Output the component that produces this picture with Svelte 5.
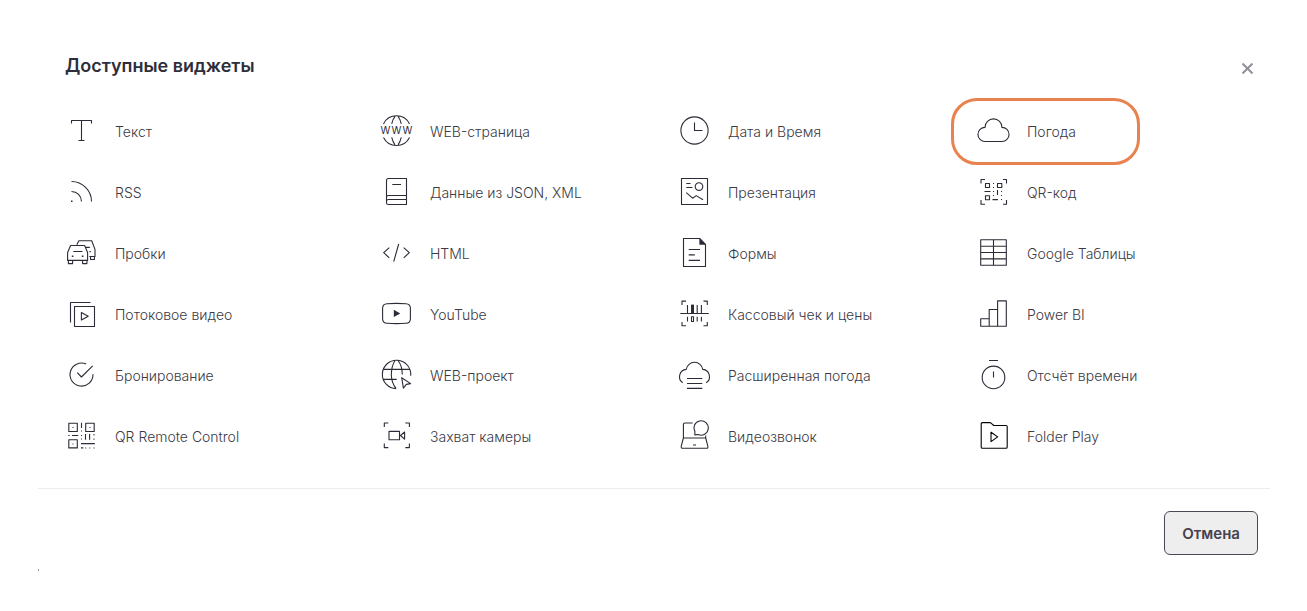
<script>
  const widgets = [
    { id: 'text', label: 'Текст' },
    { id: 'web', label: 'WEB-страница' },
    { id: 'clock', label: 'Дата и Время' },
    { id: 'weather', label: 'Погода', selected: true },
    { id: 'rss', label: 'RSS' },
    { id: 'data', label: 'Данные из JSON, XML' },
    { id: 'slides', label: 'Презентация' },
    { id: 'qr', label: 'QR-код' },
    { id: 'traffic', label: 'Пробки' },
    { id: 'html', label: 'HTML' },
    { id: 'forms', label: 'Формы' },
    { id: 'sheets', label: 'Google Таблицы' },
    { id: 'stream', label: 'Потоковое видео' },
    { id: 'youtube', label: 'YouTube' },
    { id: 'receipt', label: 'Кассовый чек и цены' },
    { id: 'powerbi', label: 'Power BI' },
    { id: 'booking', label: 'Бронирование' },
    { id: 'project', label: 'WEB-проект' },
    { id: 'forecast', label: 'Расширенная погода' },
    { id: 'timer', label: 'Отсчёт времени' },
    { id: 'remote', label: 'QR Remote Control' },
    { id: 'camera', label: 'Захват камеры' },
    { id: 'call', label: 'Видеозвонок' },
    { id: 'folder', label: 'Folder Play' }
  ];

  // Stroked outlines on a 32×32 grid
  const outlines = {
    text: 'M6.5 8.5V5.5H26.5V8.5M16.5 5.5V25.5M13.5 25.5H19.5',
    web: 'M3.5 8.9A14.5 14.5 0 0 1 29.5 8.9M3.5 22.4A14.5 14.5 0 0 0 29.5 22.4M15 1.4Q12.8 4 11.7 8.9M18 1.4Q20.2 4 21.3 8.9M11.7 22.4Q12.8 27 15 29.8M21.3 22.4Q20.2 27 18 29.8',
    clock: 'M30.1 15.5A13.6 13.6 0 1 1 2.9 15.5A13.6 13.6 0 1 1 30.1 15.5M16.5 7.5V15.5H24.5',
    weather: 'M8 26.5H25A7.05 7.05 0 0 0 25 12.4A8.5 8.5 0 0 0 8 12.4A7.05 7.05 0 0 0 8 26.5Z',
    rss: 'M6.5 5.5A20 20 0 0 1 26.5 25.5M6.5 15.5A10 10 0 0 1 16.5 25.5',
    data: 'M26.5 20V2.5H8.5Q6.5 2.5 6.5 4.5V27Q6.5 28.5 8.5 28.5H26.5V19.5H8.5Q6.5 19.5 6.5 21.5M26.5 23.5H8.5Q6.5 23.5 6.5 25.5M12.3 8.5H21',
    slides: 'M3.5 3V28.5H29.5V2.5H3.5ZM8.3 7.5H12.5M8.3 11.5H14.5M24.8 10.6A3.8 3.8 0 1 1 17.2 10.6A3.8 3.8 0 1 1 24.8 10.6M8.3 16.6L14.6 22.2L18.2 19.6L25 23.7',
    qr: 'M4 7.5V3.5H8M26 3.5H29.5V7.5M29.5 24V28.2H26M8 28.2H4V24M8.5 7.5H12.5V11.5H8.5ZM20.5 7.5H24.8V11.5H20.5ZM8.5 19.8H12.5V23.8H8.5ZM7.5 15.5H13.5M20.5 14V19M15.5 23.6H21',
    traffic: 'M5.6 8.5H19.6L22.6 15.5V23.4H2.6V15.5ZM3.4 23.4V26.6H7.6V23.4M17.6 23.4V26.6H21.9V23.4M8.3 14.5H17.4M11.8 7.8L13.9 3.7H26.7L30 12.4V19.5H24.3M25.6 19.5V22.5H29.4V19.5M20.3 10.4H24.8',
    html: 'M9.3 10.6L3.7 15.7L9.3 20.8M18.7 7L13.7 24.7M23.7 10.6L29.3 15.7L23.7 20.8',
    forms: 'M21.7 1.5H5.5V29.5H27.5V7.5ZM10.7 12.5H22M10.7 17.9H16.8M10.7 23.4H22',
    sheets: 'M3.7 2.8H29.3V28.3H3.7ZM16.5 2.8V28.3M3.7 9.2H29.3M3.7 15.5H29.3M3.7 21.9H29.3',
    stream: 'M5.5 24.5V4.5H25.5M9.5 8.5H29.5V28.5H9.5ZM16.4 14.5V22L23.2 18.2Z',
    youtube: 'M7 5.7Q16.5 5.1 26 5.7Q30.2 6 30.4 10V21Q30.2 25 26 25.3Q16.5 25.9 7 25.3Q2.8 25 2.6 21V10Q2.8 6 7 5.7Z',
    receipt: 'M4 7V3.1H8M25.5 3.1H29.3V7M29.3 24V27.8H25.5M8 27.8H4V24M2.3 15.5H30.8M9.5 7V15M19.2 7V15M23.4 7V15M9.5 18.7V23.5M13.5 18.7H15.5V23.5H13.5ZM19.2 18.7V23.5M23.4 18.7V23.5',
    powerbi: 'M12.2 20.8H3.7V28.3H29.3V2.9H20.6V28.3M20.6 11.5H12.2V28.3',
    booking: 'M28 15.3A11.5 11.5 0 1 1 21.2 5.1M12.3 13.7L16.4 18L27.7 6.8',
    project: 'M16.2 29.6A14.2 14.2 0 1 1 30.7 16.8M3.5 10.4H29.5M3.5 20.4H16.7M15 1.5Q11.5 7 11.3 15.5Q11.5 24 16 29.4M18 1.5Q22.3 7 22.3 15.5M21.7 18.7L23.4 29.2L26.3 25.4L30.6 24.6Z',
    forecast: 'M4.7 23.7A7.3 7.3 0 0 1 8.2 10.4A8.4 8.4 0 0 1 24.8 10.4A7.3 7.3 0 0 1 28.3 23.7M9 19.5H24.3M9 24.5H24.3M9 29.4H24.3',
    timer: 'M12 1.5H21M27.8 18.4A11.3 11.3 0 1 1 5.2 18.4A11.3 11.3 0 1 1 27.8 18.4M16.5 12.5V18.5',
    remote: 'M3.8 3.2H12.3V11.5H3.8ZM20.7 3.2H29.2V11.5H20.7ZM3.8 19.7H12.3V27.9H3.8ZM16.5 2.7V8M7 15.5H13.2M20.5 14V19.8M24.6 14V19.8M16 23.6H29.8M16 27.9H18.3',
    camera: 'M4.3 7V3H8.3M25.3 3H29.4V7M29.4 23.5V27.6H25.3M8.3 27.6H4.3V23.5M9 11.4H19.5V19.7H9ZM20.5 15.5L24.6 12V19.2Z',
    call: 'M14.7 3H7Q5.4 3 5.4 4.7V18L3.2 26.4Q3 28.3 4.7 28.3H28.5Q30.2 28.3 29.9 26.4L27.7 18V15.6M5.4 18H27.7M15 25H18M16.8 14.9L16.9 11.6A7.2 7.2 0 1 1 20.1 14.5Z',
    folder: 'M4.2 3.8Q4.2 2.6 5.4 2.6H13.4L16.8 5.5H29Q30.2 5.5 30.2 6.7V27Q30.2 28.3 29 28.3H5.4Q4.2 28.3 4.2 27ZM14 12.2V21.6L20.7 16.9Z'
  };

  // Solid parts
  const solids = {
    rss: 'M6 24.5H7.5V26H6Z',
    qr: 'M16 7h1v1h-1zM16 11h1v1h-1zM16 15h1v1h-1zM16 19h1v1h-1zM24 15h1v1h-1zM24 19h1v1h-1zM24 23h1v1h-1z',
    traffic: 'M6.8 18.5h1.6v1.4H6.8zM16.8 18.5h1.6v1.4h-1.6zM24.4 14h1.4v1.2h-1.4z',
    forms: 'M21.4 1.3L27.9 7.7H21.4Z',
    youtube: 'M13.8 11.8V19L20.3 15.4Z',
    receipt: 'M13 6.6H16V15.2H13Z',
    remote: 'M7.5 7h1v1h-1zM24.5 7h1v1h-1zM7.5 23.4h1v1h-1zM16 10.4h1v1.2h-1zM3.3 15h1.4v1H3.3zM16 15h1v1h-1zM16 18.5h1v1h-1zM28.5 14h1v1.5h-1zM28.5 18.5h1v1.3h-1zM20.2 27.4h1v1h-1zM24.2 27.4h1v1h-1zM28.5 27.4h1v1h-1z'
  };
</script>

<main class="dialog">
  <header>
    <h1>Доступные виджеты</h1>
    <button class="close" type="button" aria-label="Закрыть">
      <svg viewBox="0 0 10 10" aria-hidden="true"><path d="M0.5 0.5L9.5 9.5M9.5 0.5L0.5 9.5" /></svg>
    </button>
  </header>

  <div class="widgets">
    {#each widgets as w (w.id)}
      <button type="button" class="widget" class:selected={w.selected}>
        <svg class="icon" class:black={w.id === 'folder'} viewBox="0 0 32 32" aria-hidden="true">
          <path class="line" d={outlines[w.id]} />
          {#if solids[w.id]}<path class="solid" d={solids[w.id]} />{/if}
          {#if w.id === 'web'}<text x="5.5 16.5 27.5" y="19.3">WWW</text>{/if}
        </svg>
        <span class="label">{w.label}</span>
      </button>
    {/each}
  </div>

  <footer>
    <button class="cancel" type="button">Отмена</button>
  </footer>
  <div class="mark"></div>
</main>

<style>
  :global(body) {
    background: #fff;
  }
  .dialog {
    margin: 0 37px 0 38px;
    padding-top: 50px;
    font-family: Inter, 'Liberation Sans', sans-serif;
    color: #3b3a45;
  }
  button {
    font: inherit;
    color: inherit;
    margin: 0;
    cursor: pointer;
  }
  header {
    display: flex;
    align-items: center;
    justify-content: space-between;
    height: 32px;
    padding: 0 12px 0 27px;
  }
  h1 {
    margin: 0;
    font-size: 18px;
    line-height: 30px;
    font-weight: 600;
    color: #2e2e3a;
  }
  .close {
    display: flex;
    padding: 5px;
    margin-top: 5px;
    border: 0;
    background: none;
  }
  .close svg {
    width: 11px;
    height: 11px;
    stroke: #8f9096;
    stroke-width: 1.8;
  }
  .widgets {
    display: grid;
    grid-template-columns: 315fr 298fr 299fr 281fr;
    row-gap: 29px;
    padding: 33px 12px 36px 27px;
  }
  .widget {
    position: relative;
    display: flex;
    align-items: center;
    gap: 18px;
    height: 32px;
    justify-self: start;
    padding: 0;
    border: 0;
    background: none;
    font-size: 14px;
    line-height: 20px;
    font-weight: 300;
    white-space: nowrap;
  }
  .label {
    padding-top: 1px;
  }
  .selected::after {
    content: '';
    position: absolute;
    inset: -17px -64px -18px -26px;
    border: 3px solid #e8824f;
    border-radius: 26px;
  }
  .icon {
    width: 32px;
    height: 32px;
    flex: none;
    overflow: visible;
    color: #2c2b37;
  }
  .black {
    color: #000;
  }
  .line {
    fill: none;
    stroke: currentColor;
    stroke-width: 1.1;
    stroke-linejoin: round;
  }
  .solid {
    fill: currentColor;
  }
  .icon text {
    font-size: 10px;
    font-weight: 400;
    text-anchor: middle;
    fill: currentColor;
  }
  footer {
    display: flex;
    justify-content: flex-end;
    padding: 22px 12px 0;
    border-top: 1px solid #ececec;
  }
  .cancel {
    height: 44px;
    padding: 0 17px;
    border: 1px solid #4e4757;
    border-radius: 6px;
    background: #eee;
    color: #464150;
    font-size: 15px;
    font-weight: 600;
  }
  .mark {
    width: 1px;
    height: 2px;
    margin-top: 14px;
    background: #999;
  }
</style>
